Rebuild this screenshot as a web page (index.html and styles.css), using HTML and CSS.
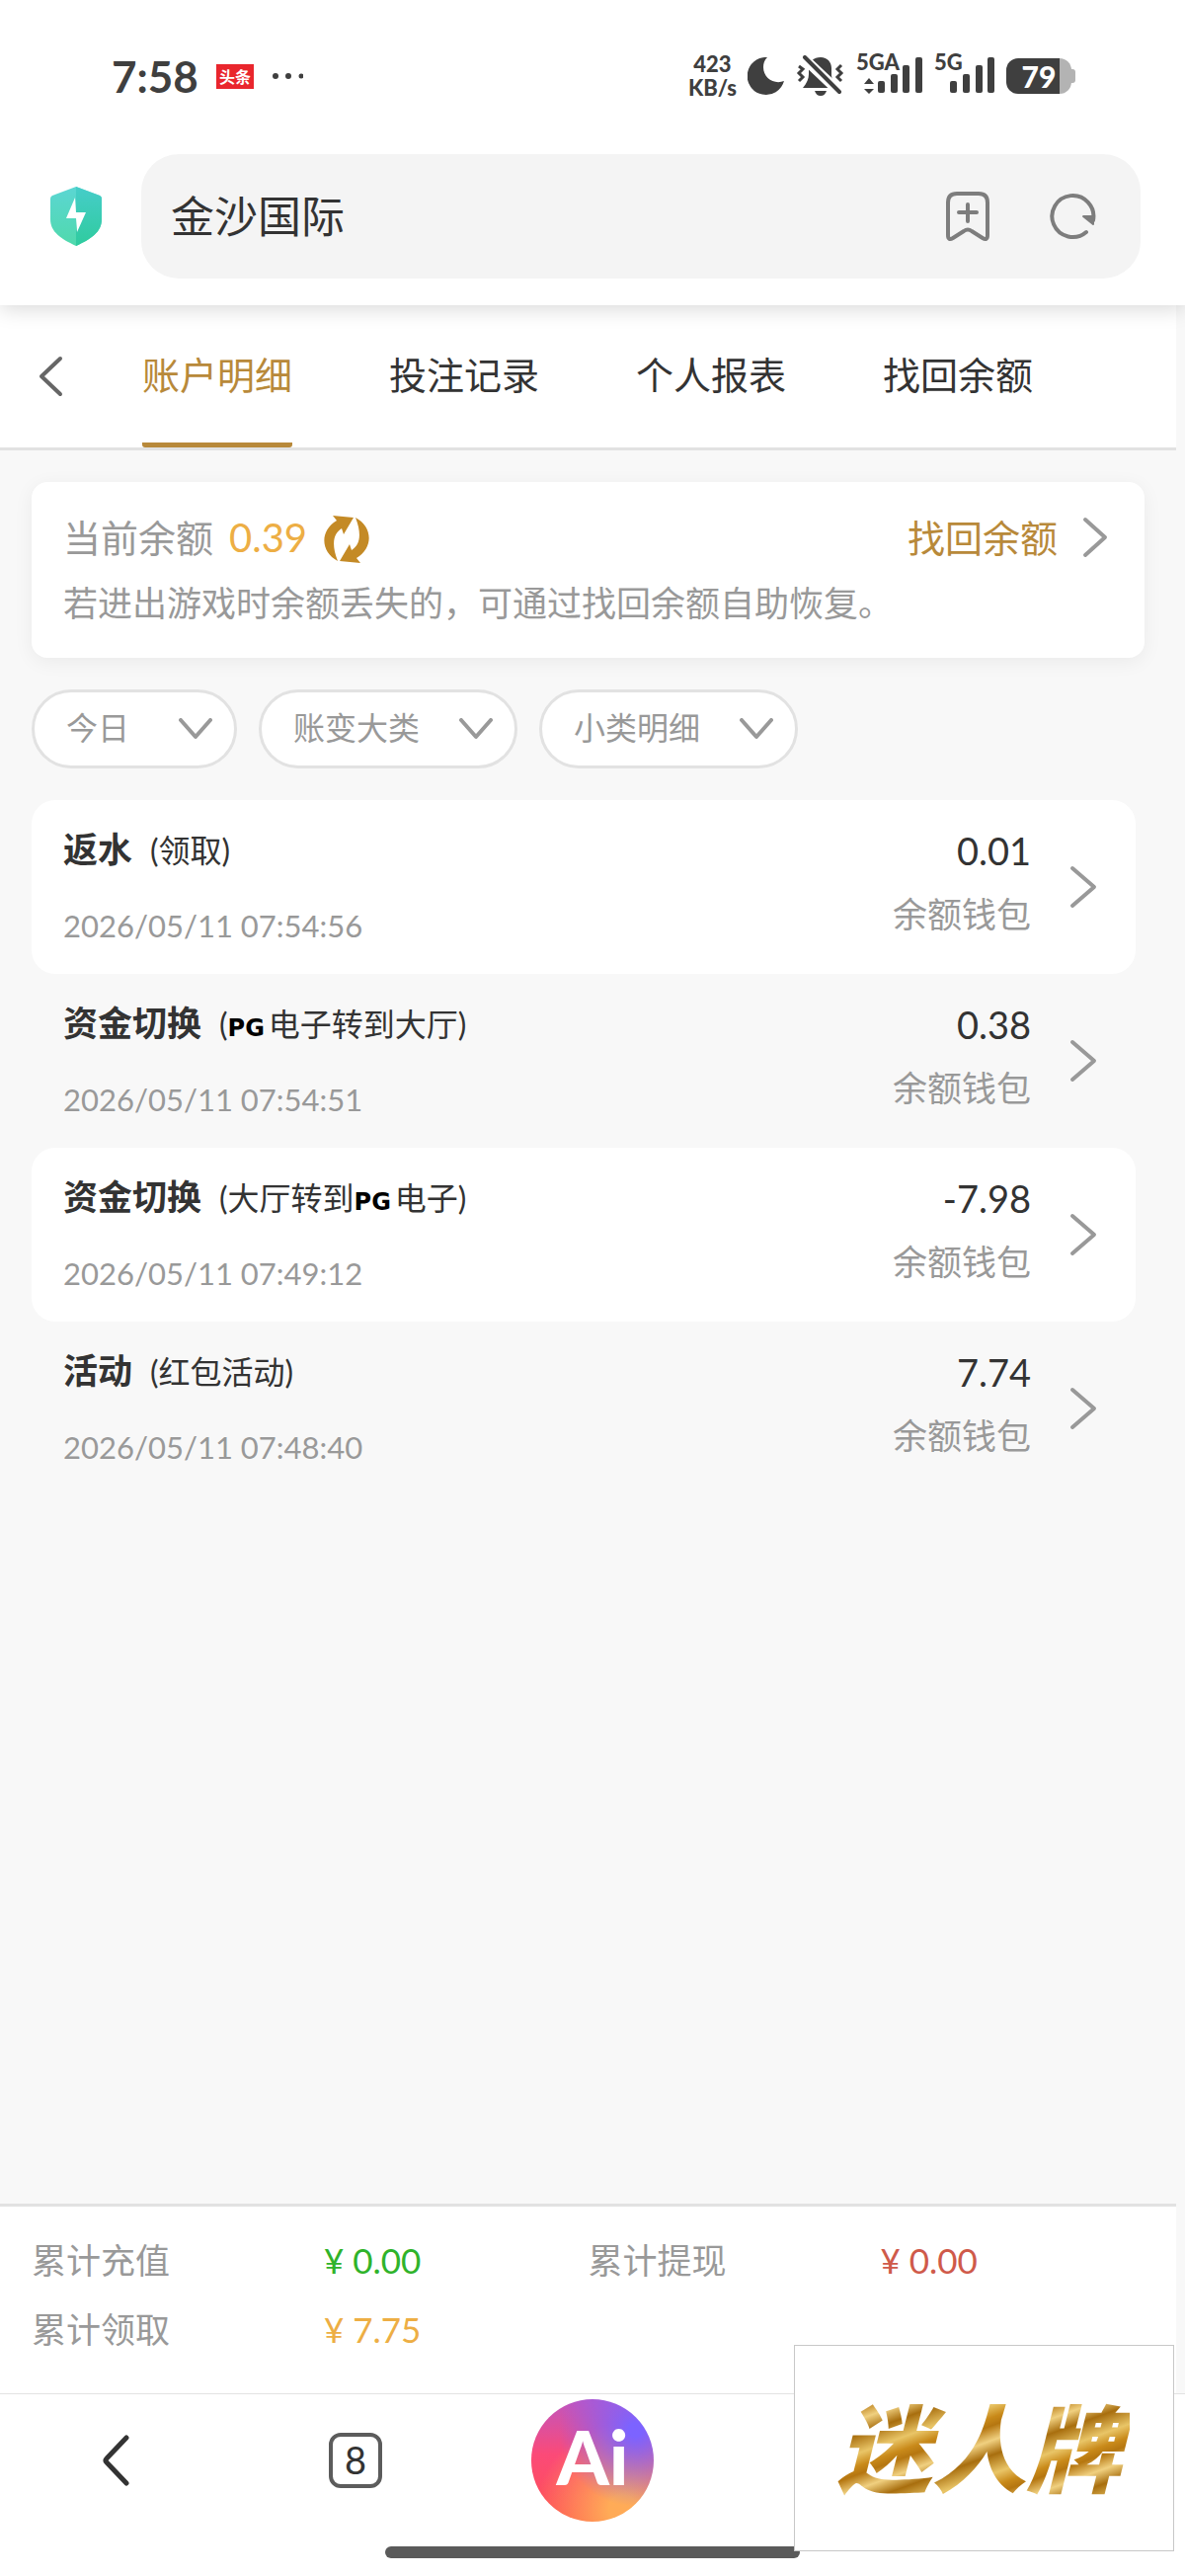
FILE: index.html
```html
<!DOCTYPE html>
<html lang="zh-CN">
<head>
  <meta charset="UTF-8" />
  <meta name="viewport" content="width=device-width, initial-scale=1.0" />
  <title>金沙国际</title>
  <link rel="stylesheet" href="styles.css">
</head>
<body>
  <header class="top">
    <div class="status-bar">
      <span class="clock">7:58</span>
      <span class="news-badge">头条</span>
      <svg class="dots" width="32" height="8" viewBox="0 0 32 8"><circle cx="4" cy="4" r="3"/><circle cx="17" cy="4" r="3"/><circle cx="30" cy="4" r="2.5"/></svg>

      <div class="status-right">
        <div class="speed"><span>423</span><span>KB/s</span></div>
        <svg width="38" height="38" viewBox="0 0 38 38"><path d="M20 0A19 19 0 1 0 37 24C27 28 16 21 16 10C16 6 17 3 20 0Z"/></svg>
        <svg width="50" height="42" viewBox="0 0 50 42">
          <path d="M13 13C13 6 18 2 25 2S36 7 36 13V19C36 24 38 27 41 33H7C11 28 13 24 13 19Z"/>
          <path d="M19 36H31C30 39 28 41 25 41S20 39 19 36Z"/>
          <path d="M6 1L45 38" stroke="#fff" stroke-width="10"/>
          <path d="M9 2L44 37" stroke="#3f3f3f" stroke-width="4" stroke-linecap="round"/>
          <path d="M3 11L7 14L3 18L7 22L3 26M46 10L42 14L46 18L42 22L46 26" fill="none" stroke="#3f3f3f" stroke-width="3"/>
        </svg>
        <div class="signal signal-wide">
          <span>5GA</span>
          <svg width="60" height="38" viewBox="0 0 60 38"><path d="M0 27L5 21L10 27ZM0 32L5 37L10 32Z"/><rect x="14" y="24" width="7" height="12" rx="2"/><rect x="27" y="17" width="7" height="19" rx="2"/><rect x="39" y="8" width="7" height="28" rx="2"/><rect x="52" y="0" width="7" height="36" rx="2"/></svg>
        </div>
        <div class="signal">
          <span>5G</span>
          <svg width="46" height="38" viewBox="0 0 46 38"><rect x="0" y="24" width="7" height="12" rx="2"/><rect x="13" y="17" width="7" height="19" rx="2"/><rect x="26" y="8" width="7" height="28" rx="2"/><rect x="38" y="0" width="7" height="36" rx="2"/></svg>
        </div>
        <div class="battery"><span>79</span></div>
      </div>
    </div>

    <div class="address-row">
      <svg class="shield" width="54" height="62" viewBox="0 0 54 62">
        <defs>
          <linearGradient id="shieldFill" x1="0" y1="0" x2="0" y2="1"><stop offset="0" stop-color="#5bd6d3"/><stop offset="1" stop-color="#50d9ac"/></linearGradient>
          <linearGradient id="shieldDark" x1="0" y1="0" x2="0" y2="1"><stop offset="0" stop-color="#46cdc9"/><stop offset="1" stop-color="#2fcb9e"/></linearGradient>
        </defs>
        <path d="M27 1L51 10Q53 11 53 13V34C53 47 42 54 27 61C12 54 1 47 1 34V13Q1 11 3 10Z" fill="url(#shieldFill)"/>
        <path d="M27 1L51 10Q53 11 53 13V34C53 47 42 54 27 61Z" fill="url(#shieldDark)"/>
        <path d="M26 12L17 33H27L28 47L37 27H27Z" fill="#fff"/>
      </svg>
      <div class="address">
        <input type="text" value="金沙国际" aria-label="网址">
        <button aria-label="收藏">
          <svg width="46" height="52" viewBox="0 0 46 52"><path d="M3 12Q3 3 12 3H34Q43 3 43 12V45Q43 51 38 48L27 41Q23 38 19 41L8 48Q3 51 3 45ZM23 14V31M14 22H32"/></svg>
        </button>
        <button aria-label="刷新">
          <svg width="50" height="50" viewBox="0 0 50 50"><path d="M39 41A21 21 0 1 1 46 29"/><path d="M36 25H46V33Z"/></svg>
        </button>
      </div>
    </div>
  </header>

  <main class="page">
    <nav class="tabs">
      <button class="back" aria-label="返回"><svg width="28" height="42" viewBox="0 0 28 42"><path d="M25 3L6 21L25 39"/></svg></button>
      <a href="#" class="active">账户明细</a>
      <a href="#">投注记录</a>
      <a href="#">个人报表</a>
      <a href="#">找回余额</a>
    </nav>

    <section class="balance">
      <div class="balance-row">
        <span>当前余额</span>
        <span class="money">0.39</span>
        <button class="refresh" aria-label="刷新余额">
          <svg width="48" height="50" viewBox="0 0 48 50">
            <path id="swirl" d="M10 1L31 3L21 20L19 14C11 19 8 29 15 47C-2 38 -4 17 14 6Z"/>
            <use href="#swirl" transform="rotate(180 24 25)"/>
          </svg>
        </button>
        <a href="#" class="recover">找回余额
          <svg width="28" height="42" viewBox="0 0 28 42"><path d="M4 3L24 21L4 39"/></svg>
        </a>
      </div>
      <p>若进出游戏时余额丢失的，可通过找回余额自助恢复。</p>
    </section>

    <div class="filters">
      <label class="filter">
        <select aria-label="日期"><option>今日</option></select>
        <svg width="34" height="22" viewBox="0 0 34 22"><path d="M2 2L17 19L32 2"/></svg>
      </label>
      <label class="filter">
        <select aria-label="大类"><option>账变大类</option></select>
        <svg width="34" height="22" viewBox="0 0 34 22"><path d="M2 2L17 19L32 2"/></svg>
      </label>
      <label class="filter">
        <select aria-label="小类"><option>小类明细</option></select>
        <svg width="34" height="22" viewBox="0 0 34 22"><path d="M2 2L17 19L32 2"/></svg>
      </label>
    </div>

    <div class="records">
      <a href="#" class="record">
        <div class="record-info">
          <div class="title"><b>返水</b><span>(领取)</span></div>
          <time>2026/05/11 07:54:56</time>
        </div>
        <div class="record-amount"><span>0.01</span><small>余额钱包</small></div>
        <svg width="30" height="44" viewBox="0 0 30 44"><path d="M4 3L26 22L4 41"/></svg>
      </a>
      <a href="#" class="record">
        <div class="record-info">
          <div class="title"><b>资金切换</b><span>(<i>PG</i>电子转到大厅)</span></div>
          <time>2026/05/11 07:54:51</time>
        </div>
        <div class="record-amount"><span>0.38</span><small>余额钱包</small></div>
        <svg width="30" height="44" viewBox="0 0 30 44"><path d="M4 3L26 22L4 41"/></svg>
      </a>
      <a href="#" class="record">
        <div class="record-info">
          <div class="title"><b>资金切换</b><span>(大厅转到<i>PG</i>电子)</span></div>
          <time>2026/05/11 07:49:12</time>
        </div>
        <div class="record-amount"><span>-7.98</span><small>余额钱包</small></div>
        <svg width="30" height="44" viewBox="0 0 30 44"><path d="M4 3L26 22L4 41"/></svg>
      </a>
      <a href="#" class="record">
        <div class="record-info">
          <div class="title"><b>活动</b><span>(红包活动)</span></div>
          <time>2026/05/11 07:48:40</time>
        </div>
        <div class="record-amount"><span>7.74</span><small>余额钱包</small></div>
        <svg width="30" height="44" viewBox="0 0 30 44"><path d="M4 3L26 22L4 41"/></svg>
      </a>
    </div>

    <dl class="totals">
      <div><dt>累计充值</dt><dd class="green">¥ 0.00</dd></div>
      <div><dt>累计提现</dt><dd class="red">¥ 0.00</dd></div>
      <div><dt>累计领取</dt><dd class="orange">¥ 7.75</dd></div>
    </dl>
  </main>

  <footer class="browser-bar">
    <div class="browser-nav">
      <button aria-label="后退"><svg width="32" height="56" viewBox="0 0 32 56"><path d="M24 5L4 26Q2 28 4 30L24 51"/></svg></button>
      <button aria-label="窗口"><span class="tab-count">8</span></button>
      <button><span class="ai">Ai</span></button>
    </div>
    <div class="home-line"></div>
  </footer>

  <div class="brand-card"><span>迷人牌</span></div>
</body>
</html>
```

FILE: styles.css
```css
:root {
  --gold: #b8893a;
  --orange: #edae44;
  --text: #333;
  --muted: #999;
  --line: #e2e2e2;
  --page-bg: #f8f8f8;
}

* {
  box-sizing: border-box;
}

body {
  margin: 0;
  min-height: 100vh;
  display: flex;
  flex-direction: column;
  font-family: Lato, "Noto Sans CJK SC", sans-serif;
  color: var(--text);
  background: var(--page-bg);
}

a {
  color: inherit;
  text-decoration: none;
}

button {
  border: none;
  padding: 0;
  background: none;
  font-family: inherit;
  color: inherit;
  cursor: pointer;
}

svg {
  display: block;
  flex-shrink: 0;
}

/* phone status bar + address bar */
.top {
  position: relative;
  z-index: 1;
  background: #fff;
  padding-bottom: 27px;
  box-shadow: 0 4px 20px rgba(0, 0, 0, 0.15);
}

.status-bar {
  display: flex;
  align-items: center;
  height: 156px;
  padding: 0 111px 2px 113px;
  color: #3f3f3f;
  fill: #3f3f3f;
}

.clock {
  font-size: 44px;
  font-weight: 700;
  font-family: Lato, sans-serif;
}

.news-badge {
  margin: 0 18px;
  padding: 0 3px;
  background: #e9262d;
  color: #fff;
  font-size: 16px;
  line-height: 25px;
  font-weight: 700;
}

.status-right {
  display: flex;
  align-items: center;
  gap: 11px;
  margin-left: auto;
}

.speed {
  display: flex;
  flex-direction: column;
  align-items: center;
  font-size: 22px;
  line-height: 24px;
  font-weight: 900;
}

.signal {
  position: relative;
  padding-left: 16px;
}

.signal-wide {
  padding-left: 8px;
}

.signal span {
  position: absolute;
  left: 0;
  top: -6px;
  font-size: 22px;
  line-height: 22px;
  font-weight: 900;
}

.battery {
  position: relative;
  width: 66px;
  height: 36px;
  margin-right: 4px;
  border-radius: 12px;
  background: linear-gradient(90deg, #3f3f3f 54px, #b3b3b3 54px);
}

.battery::after {
  content: "";
  position: absolute;
  right: -4px;
  top: 11px;
  width: 5px;
  height: 14px;
  border-radius: 0 3px 3px 0;
  background: #b3b3b3;
}

.battery span {
  display: block;
  text-align: center;
  color: #fff;
  font-size: 30px;
  line-height: 36px;
  font-weight: 900;
}

.address-row {
  display: flex;
  align-items: center;
  gap: 39px;
  padding: 0 45px 0 50px;
}

.address {
  flex: 1;
  display: flex;
  align-items: center;
  gap: 58px;
  height: 126px;
  padding: 0 44px 0 30px;
  border-radius: 38px;
  background: #f4f4f4;
}

.address input {
  flex: 1;
  min-width: 0;
  border: none;
  padding: 0 0 4px;
  background: none;
  font-family: inherit;
  font-size: 44px;
  color: var(--text);
}

.address path {
  fill: none;
  stroke: #7d7d7d;
  stroke-width: 4;
  stroke-linecap: round;
  stroke-linejoin: round;
}

.address button:last-child path:last-child {
  fill: #7d7d7d;
  stroke-width: 2;
}

.page {
  flex: 1;
  display: flex;
  flex-direction: column;
  margin-right: 9px;
}

.tabs {
  display: flex;
  gap: 98px;
  height: 147px;
  padding-left: 36px;
  border-bottom: 3px solid var(--line);
  background: #fff;
}

.tabs a {
  border-bottom: 5px solid transparent;
  font-size: 38px;
  line-height: 140px;
}

.tabs a.active {
  color: var(--gold);
  border-color: var(--gold);
  border-radius: 3px;
}

.tabs .back {
  margin-right: -18px;
}

.back path,
.recover path,
.filter path,
.record path {
  fill: none;
  stroke: var(--muted);
  stroke-width: 4;
  stroke-linecap: round;
  stroke-linejoin: round;
}

.back path {
  stroke: #666;
}

.balance {
  margin: 32px 32px 0;
  padding: 32px 36px 30px 32px;
  border-radius: 16px;
  background: #fff;
  color: var(--muted);
  box-shadow: 0 4px 20px rgba(0, 0, 0, 0.06);
}

.balance-row {
  display: flex;
  align-items: center;
  height: 52px;
  font-size: 38px;
  line-height: 48px;
}

.balance-row > span,
.recover {
  padding-bottom: 4px;
}

.money {
  margin: 0 16px;
  font-size: 40px;
  color: var(--orange);
}

.refresh svg {
  fill: #c48a26;
}

.recover {
  display: flex;
  align-items: center;
  gap: 24px;
  margin-left: auto;
  color: var(--gold);
}

.balance p {
  margin: 12px 0 0;
  font-size: 35px;
  line-height: 52px;
}

.filters {
  display: flex;
  gap: 22px;
  margin: 32px 32px 0;
}

.filter {
  display: flex;
  align-items: center;
  gap: 39px;
  height: 80px;
  padding: 0 22px 0 32px;
  border: 3px solid var(--line);
  border-radius: 40px;
  background: #fff;
}

.filter select {
  appearance: none;
  min-width: 75px;
  border: none;
  padding: 0 0 4px;
  background: none;
  font-family: inherit;
  font-size: 32px;
  color: var(--muted);
}

.filter svg {
  pointer-events: none;
}

.records {
  flex: 1;
  margin: 32px 41px 32px 32px;
}

.record {
  display: flex;
  align-items: center;
  height: 176px;
  padding: 0 38px 0 32px;
  border-radius: 24px;
}

.record:nth-child(odd) {
  background: #fff;
}

.record-info {
  flex: 1;
}

.title {
  height: 52px;
  margin-bottom: 26px;
  font-size: 35px;
  line-height: 52px;
}

.title b {
  font-weight: 700;
}

.title span {
  margin-left: 18px;
  font-size: 32px;
}

.title i {
  margin-right: 4px;
  font-family: "DejaVu Sans", sans-serif;
  font-size: 24px;
  font-weight: 700;
  font-style: normal;
  color: #000;
}

.record time {
  display: block;
  font-size: 31px;
  line-height: 52px;
  color: var(--muted);
}

.record-amount {
  display: flex;
  flex-direction: column;
  align-items: flex-end;
  margin-right: 38px;
}

.record-amount span {
  font-size: 38px;
  line-height: 64px;
}

.record-amount small {
  margin-bottom: 10px;
  font-size: 35px;
  line-height: 64px;
  color: var(--muted);
}

.totals {
  display: grid;
  grid-template-columns: 1fr 1fr;
  row-gap: 18px;
  margin: 0;
  padding: 28px 32px 39px;
  border-top: 3px solid var(--line);
  background: #fff;
  font-size: 35px;
  line-height: 52px;
}

.totals div {
  display: flex;
}

.totals dt {
  width: 296px;
  color: var(--muted);
}

.totals dd {
  margin: 0;
}

.green {
  color: #2fb32a;
}

.red {
  color: #cf5a4a;
}

.orange {
  color: var(--orange);
}

.browser-bar {
  border-top: 1px solid var(--line);
  background: #fff;
  padding: 5px 0 18px;
}

.browser-nav {
  display: grid;
  grid-template-columns: repeat(5, 1fr);
}

.browser-nav button {
  display: flex;
  align-items: center;
  justify-content: center;
  height: 124px;
}

.browser-nav path {
  fill: none;
  stroke: #333;
  stroke-width: 5;
  stroke-linecap: round;
}

.tab-count {
  width: 54px;
  height: 56px;
  border: 4px solid #5c5c5c;
  border-radius: 12px;
  font-size: 38px;
  line-height: 46px;
}

.ai {
  width: 124px;
  height: 124px;
  border-radius: 50%;
  color: #fff;
  font-size: 76px;
  line-height: 116px;
  font-weight: 900;
  background:
    radial-gradient(circle at 85% 25%, #7c63ff 5%, rgba(124, 99, 255, 0) 55%),
    radial-gradient(circle at 75% 90%, #ffab57 10%, rgba(255, 171, 87, 0) 60%),
    linear-gradient(180deg, #c055c0, #fb4a78 45%, #ff5050);
}

.home-line {
  width: 35%;
  height: 12px;
  margin: 25px auto 0;
  border-radius: 6px;
  background: #5a5a5a;
}

/* floating brand picture */
.brand-card {
  position: fixed;
  z-index: 2;
  right: 11px;
  bottom: 25px;
  display: flex;
  align-items: center;
  justify-content: center;
  width: 385px;
  height: 209px;
  padding: 0 10px 8px 0;
  border: 1px solid #c8c8c8;
  background: #fff;
}

.brand-card span {
  padding: 0 8px;
  font-family: "Noto Sans CJK SC", sans-serif;
  font-size: 96px;
  font-weight: 900;
  font-style: italic;
  color: transparent;
  background: repeating-linear-gradient(160deg, #a86e0e 0, #e9c567 18px, #c98a1a 30px, #b57610 38px, #f0d080 52px, #a86e0e 66px);
  -webkit-background-clip: text;
  background-clip: text;
}
```
